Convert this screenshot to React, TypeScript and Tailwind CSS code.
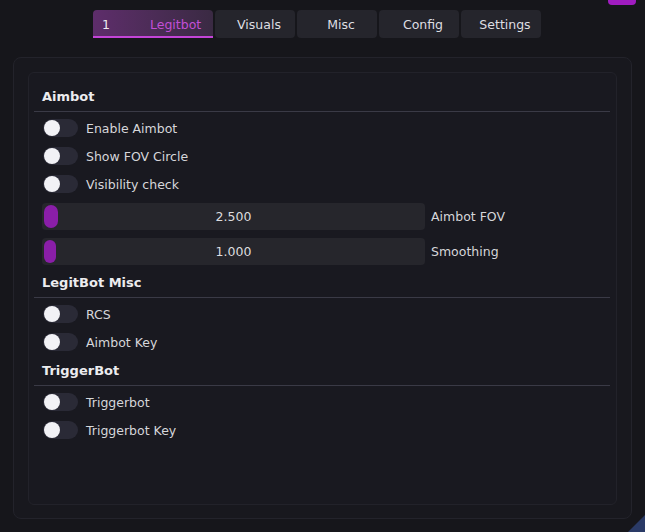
import React from "react";

const font = { fontFamily: '"DejaVu Sans", Verdana, sans-serif' };

function Toggle({ label }: { label: string }) {
  return (
    <div className="flex h-[28px] items-center">
      <div className="relative ml-[1px] h-[18px] w-[35px] rounded-full bg-[#2a2a36]">
        <div className="absolute left-[1px] top-[1px] h-[16px] w-[16px] rounded-full bg-[#f2f2f6]" />
      </div>
      <span className="ml-[8px] pt-[2px] text-[12.5px] text-[#d6d6da]">{label}</span>
    </div>
  );
}

function Slider({ value, label, thumbW }: { value: string; label: string; thumbW: string }) {
  return (
    <div className="flex h-[27px] items-center">
      <div className="relative flex h-[27px] w-[383px] items-center justify-center rounded-[4px] bg-[#26262c]">
        <div className={`absolute left-[2px] top-[2px] h-[23px] ${thumbW} rounded-full bg-[#8a1ea8]`} />
        <span className="pt-[2px] text-[12.5px] text-[#dcdcdf]">{value}</span>
      </div>
      <span className="ml-[6px] pt-[2px] text-[12.5px] text-[#d6d6da]">{label}</span>
    </div>
  );
}

function Header({ title, className }: { title: string; className: string }) {
  return (
    <div className={className}>
      <div className="flex h-[20px] items-center pl-[8px] pt-[2px] text-[13px] font-bold text-[#ececef]">{title}</div>
      <div className="mt-[5px] h-[1px] w-[576px] bg-[#3a3a46]" />
    </div>
  );
}

export default function App() {
  const tabs = ["Visuals", "Misc", "Config", "Settings"];
  return (
    <div className="relative h-[532px] w-[645px] overflow-hidden bg-[#16161b]" style={font}>
      <div className="absolute right-[9px] top-0 h-[5px] w-[28px] rounded-b-[4px] bg-[#a01cc0]" />
      <div className="absolute bottom-[-12px] right-[-12px] h-[24px] w-[24px] rotate-45 bg-[#2a3a66]" />

      <div className="flex pl-[93px] pt-[10px]">
        <div className="relative flex h-[28px] w-[120px] items-center rounded-t-[4px] bg-gradient-to-r from-[#5e2d6b] to-[#3a2a43] pt-[2px]">
          <span className="ml-[9px] text-[12.5px] text-[#ececf0]">1</span>
          <span className="ml-[40px] text-[12.5px] text-[#c24fd6]">Legitbot</span>
          <div className="absolute bottom-0 left-0 h-[2px] w-full bg-[#c444d8]" />
        </div>
        {tabs.map((t) => (
          <div
            key={t}
            className="ml-[2px] flex h-[28px] w-[80px] items-center justify-center rounded-[4px] bg-[#25252c] pl-[8px] pt-[2px] text-[12.5px] text-[#dedee2]"
          >
            {t}
          </div>
        ))}
      </div>

      <div className="ml-[13px] mt-[19px] h-[462px] w-[619px] rounded-[8px] border border-[#23232b] bg-[#18181e] pl-[14px] pt-[14px]">
        <div className="h-[433px] w-[589px] rounded-[6px] border border-[#22222a] bg-[#191920] pl-[5px]">
          <Header title="Aimbot" className="pt-[13px]" />
          <div className="mt-[2px] pl-[8px]">
            <Toggle label="Enable Aimbot" />
            <Toggle label="Show FOV Circle" />
            <Toggle label="Visibility check" />
            <div className="mt-[5px]">
              <Slider value="2.500" label="Aimbot FOV" thumbW="w-[14px]" />
            </div>
            <div className="mt-[8px]">
              <Slider value="1.000" label="Smoothing" thumbW="w-[12px]" />
            </div>
          </div>
          <Header title="LegitBot Misc" className="mt-[7px]" />
          <div className="mt-[2px] pl-[8px]">
            <Toggle label="RCS" />
            <Toggle label="Aimbot Key" />
          </div>
          <Header title="TriggerBot" className="mt-[4px]" />
          <div className="mt-[2px] pl-[8px]">
            <Toggle label="Triggerbot" />
            <Toggle label="Triggerbot Key" />
          </div>
        </div>
      </div>
    </div>
  );
}
